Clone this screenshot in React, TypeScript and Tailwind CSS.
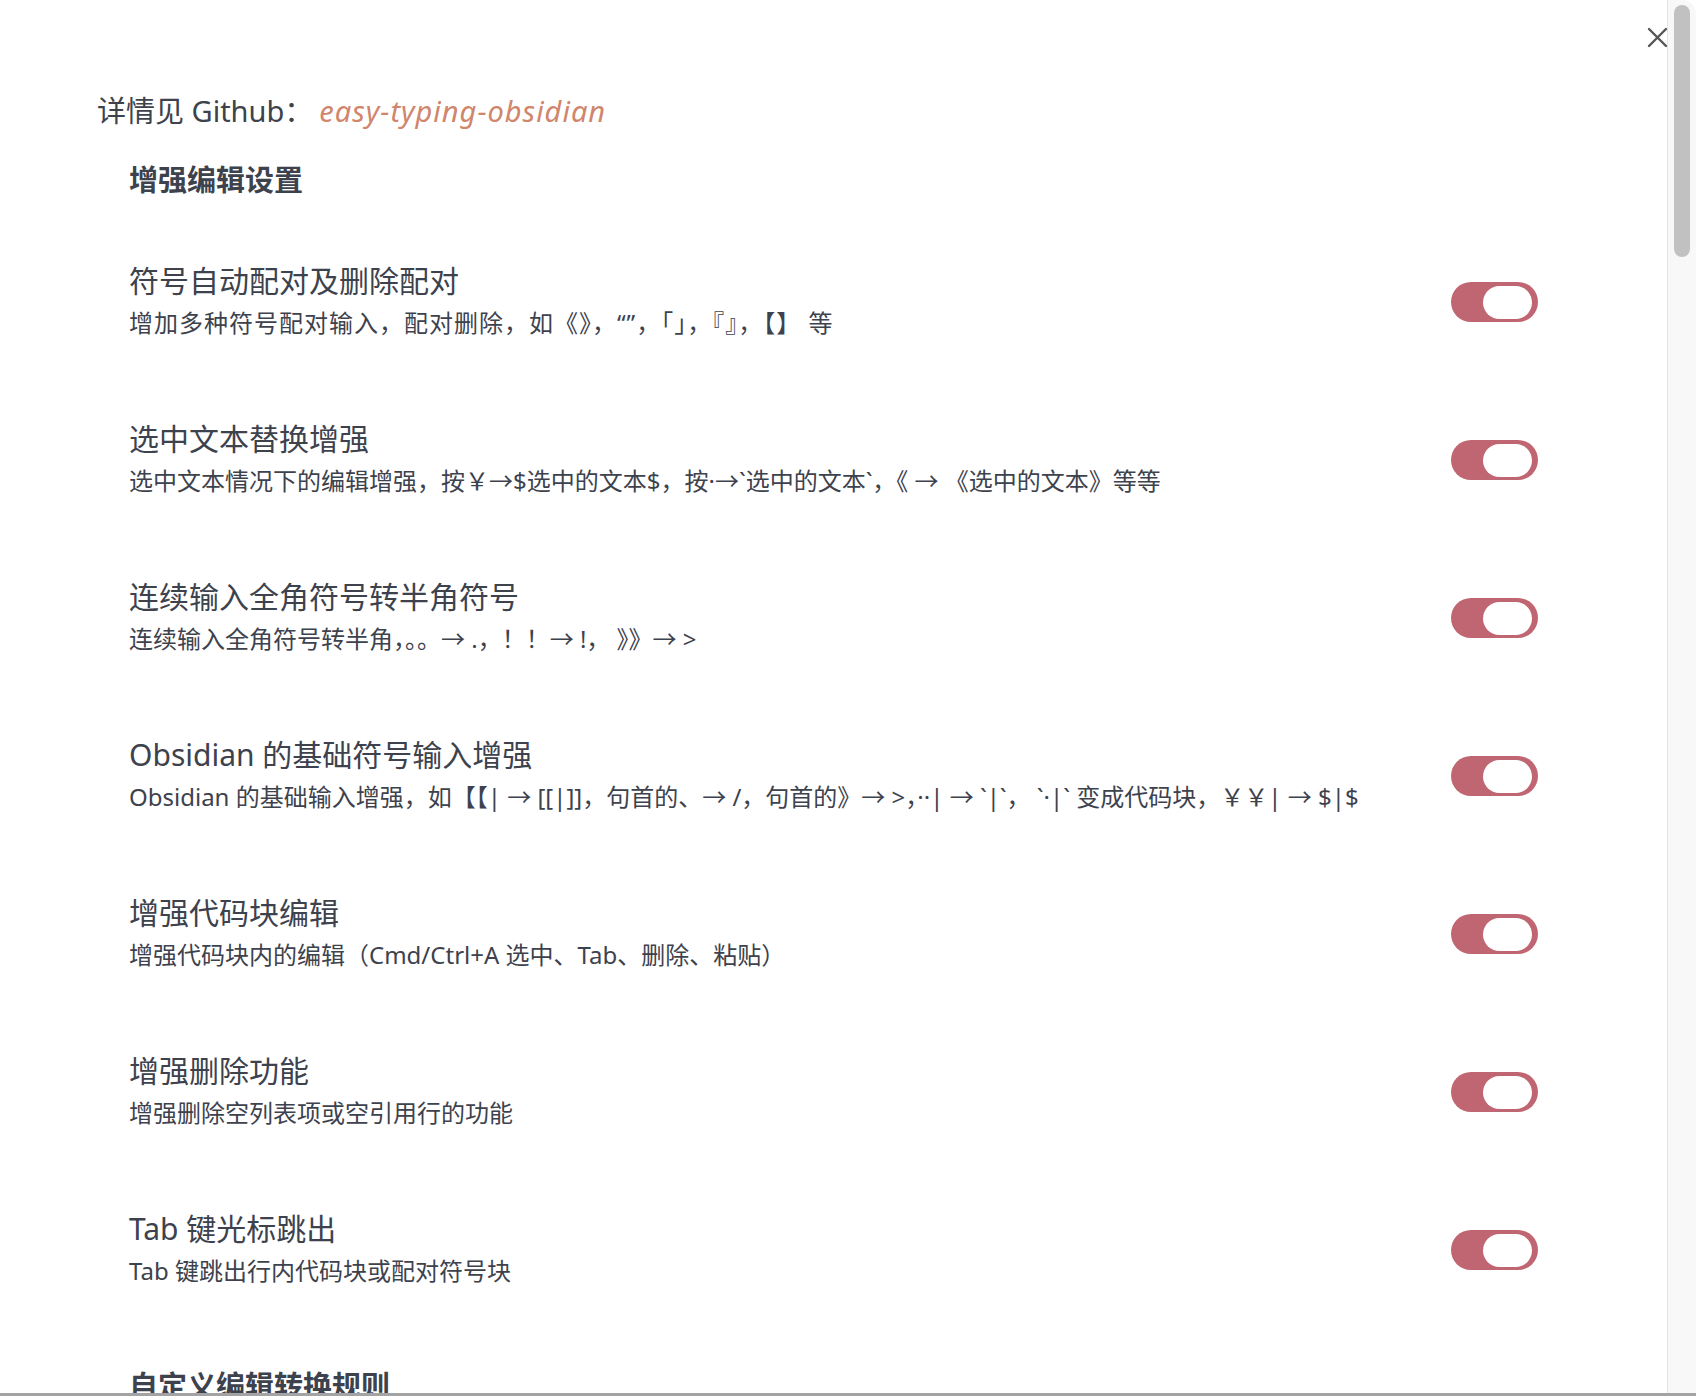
import { FC } from "react";

type Setting = {
  name: string;
  desc: string;
};

const settings: Setting[] = [
  {
    name: "符号自动配对及删除配对",
    desc: "增加多种符号配对输入，配对删除，如《》，“”，「」，『』，【】 等",
  },
  {
    name: "选中文本替换增强",
    desc: "选中文本情况下的编辑增强，按￥→$选中的文本$，按·→`选中的文本`，《 → 《选中的文本》等等",
  },
  {
    name: "连续输入全角符号转半角符号",
    desc: "连续输入全角符号转半角，。。→ .，！！→ !， 》》→ >",
  },
  {
    name: "Obsidian 的基础符号输入增强",
    desc: "Obsidian 的基础输入增强，如【【| → [[|]]，句首的、→ /，句首的》→ >，··| → `|`， `·|` 变成代码块，￥￥| → $|$",
  },
  {
    name: "增强代码块编辑",
    desc: "增强代码块内的编辑（Cmd/Ctrl+A 选中、Tab、删除、粘贴）",
  },
  {
    name: "增强删除功能",
    desc: "增强删除空列表项或空引用行的功能",
  },
  {
    name: "Tab 键光标跳出",
    desc: "Tab 键跳出行内代码块或配对符号块",
  },
];

const Toggle: FC = () => (
  <div className="w-[87px] h-[40px] shrink-0 rounded-full bg-[#c06672] flex items-center justify-end pr-[6px]">
    <div className="w-[49px] h-[33px] rounded-full bg-white" />
  </div>
);

const SettingRow: FC<{ setting: Setting; wide?: boolean }> = ({ setting, wide }) => (
  <div className="flex items-center justify-between py-[40px]">
    <div className="flex flex-col">
      <div className="text-[30px] leading-[36px] text-[#3d424d]">
        {setting.name}
      </div>
      <div
        className={
          wide
            ? "mt-[6px] text-[24px] leading-[36px] tracking-[1px] text-[#3d424d]"
            : "mt-[6px] text-[24px] leading-[36px] text-[#3d424d]"
        }
      >
        {setting.desc}
      </div>
    </div>
    <Toggle />
  </div>
);

export default function App() {
  return (
    <div className="relative w-full h-[1396px] overflow-hidden bg-white flex border-b-[3px] border-[#a3a3a3] font-['Noto_Sans','Noto_Sans_CJK_SC',sans-serif]">
      <div className="flex-1 min-w-0 pl-[97px] pr-[129px] pt-[91px]">
        <div className="text-[29px] leading-[40px] text-[#3d424d]">
          详情见 Github：
          <span className="ml-[6px] italic tracking-[1px] text-[#d0856c]">easy-typing-obsidian</span>
        </div>
        <div className="pl-[32px]">
          <div className="mt-[29px] text-[29px] leading-[40px] font-bold text-[#3d424d]">
            增强编辑设置
          </div>
          <div className="mt-[23px]">
            {settings.map((s, i) => (
              <SettingRow key={s.name} setting={s} wide={i === 0} />
            ))}
          </div>
          <div className="mt-[37px] text-[29px] leading-[40px] font-bold text-[#3d424d]">
            自定义编辑转换规则
          </div>
        </div>
      </div>

      <button className="absolute left-[1647px] top-[27px] w-[21px] h-[21px] text-[#555]">
        <svg viewBox="0 0 21 21" width="21" height="21" fill="none" stroke="currentColor" strokeWidth="2.4" strokeLinecap="round">
          <path d="M2 2 L19 19 M19 2 L2 19" />
        </svg>
      </button>

      <div className="w-[29px] shrink-0 border-l border-[#e4e4e4] bg-[#f8f8f8] rounded-tr-[14px] pl-[6px] pr-[6px] pt-[5px]">
        <div className="w-[16px] h-[252px] rounded-full bg-[#c1c1c1]" />
      </div>
    </div>
  );
}
